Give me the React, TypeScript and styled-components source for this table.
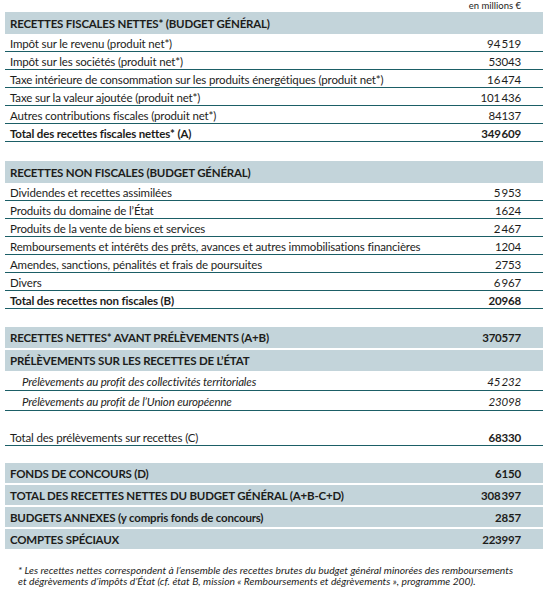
import { FC } from 'react';
import styled, { createGlobalStyle } from 'styled-components';

const GlobalStyle = createGlobalStyle`
  html, body {
    margin: 0;
    padding: 0;
    background: #ffffff;
  }
  body {
    font-family: 'Lato', 'Noto Sans', sans-serif;
    color: #1d1d1b;
  }
`;

const Page = styled.div`
  width: 547px;
  padding: 0 4px 0 5px;
  box-sizing: border-box;
`;

const Unit = styled.div`
  height: 12px;
  padding-right: 22px;
  text-align: right;
  font-size: 9.5px;
  line-height: 11px;
`;

const Group = styled.div<{ $top: number }>`
  margin-top: ${props => props.$top}px;
`;

const Band = styled.div<{ $spaced?: boolean; $h?: number }>`
  display: flex;
  justify-content: space-between;
  align-items: center;
  height: ${props => props.$h ?? 21}px;
  margin-top: ${props => (props.$spaced ? 2 : 0)}px;
  padding: 0 22px 0 5px;
  box-sizing: border-box;
  background: #c3d4da;
  font-size: 11.5px;
  letter-spacing: -0.2px;
  font-weight: 700;
  white-space: nowrap;
`;

const Row = styled.div<{ $bold?: boolean; $italic?: boolean }>`
  display: flex;
  justify-content: space-between;
  align-items: flex-end;
  height: ${props => (props.$italic ? 20 : 18)}px;
  padding: 0 22px ${props => (props.$italic ? 1 : 0)}px ${props => (props.$italic ? 17 : 5)}px;
  box-sizing: border-box;
  border-bottom: 1px solid #1b5e66;
  font-size: 11.5px;
  letter-spacing: -0.15px;
  line-height: 14px;
  font-weight: ${props => (props.$bold ? 700 : 400)};
  font-style: ${props => (props.$italic ? 'italic' : 'normal')};
  white-space: nowrap;
`;

const Note = styled.p`
  margin: 16px 0 0;
  padding-left: 13px;
  font-size: 10.3px;
  line-height: 11px;
  font-style: italic;
  white-space: nowrap;
`;

interface Line {
  label: string;
  value: string;
  bold?: boolean;
}

const fiscales: Line[] = [
  { label: 'Impôt sur le revenu (produit net*)', value: '94\u2009519' },
  { label: 'Impôt sur les sociétés (produit net*)', value: '53043' },
  { label: 'Taxe intérieure de consommation sur les produits énergétiques (produit net*)', value: '16\u2009474' },
  { label: 'Taxe sur la valeur ajoutée (produit net*)', value: '101\u2009436' },
  { label: 'Autres contributions fiscales (produit net*)', value: '84137' },
  { label: 'Total des recettes fiscales nettes* (A)', value: '349\u200A609', bold: true },
];

const nonFiscales: Line[] = [
  { label: 'Dividendes et recettes assimilées', value: '5\u2009953' },
  { label: 'Produits du domaine de l’État', value: '1624' },
  { label: 'Produits de la vente de biens et services', value: '2\u2009467' },
  { label: 'Remboursements et intérêts des prêts, avances et autres immobilisations financières', value: '1204' },
  { label: 'Amendes, sanctions, pénalités et frais de poursuites', value: '2753' },
  { label: 'Divers', value: '6\u2009967' },
  { label: 'Total des recettes non fiscales (B)', value: '20968', bold: true },
];

const prelevements: Line[] = [
  { label: 'Prélèvements au profit des collectivités territoriales', value: '45\u2009232' },
  { label: 'Prélèvements au profit de l’Union européenne', value: '23098' },
];

const totaux: Line[] = [
  { label: 'FONDS DE CONCOURS (D)', value: '6150' },
  { label: 'TOTAL DES RECETTES NETTES DU BUDGET GÉNÉRAL (A+B-C+D)', value: '308\u2009397' },
  { label: 'BUDGETS ANNEXES (y compris fonds de concours)', value: '2857' },
  { label: 'COMPTES SPÉCIAUX', value: '223997' },
];

const Rows: FC<{ lines: Line[]; italic?: boolean }> = ({ lines, italic }) => (
  <>
    {lines.map(line => (
      <Row key={line.label} $bold={line.bold} $italic={italic}>
        <span>{line.label}</span>
        <span>{line.value}</span>
      </Row>
    ))}
  </>
);

const App: FC = () => (
  <Page>
    <GlobalStyle />
    <Unit>en millions €</Unit>

    <Group $top={0}>
      <Band $h={22}>RECETTES FISCALES NETTES* (BUDGET GÉNÉRAL)</Band>
      <Rows lines={fiscales} />
    </Group>

    <Group $top={19}>
      <Band $h={22}>RECETTES NON FISCALES (BUDGET GÉNÉRAL)</Band>
      <Rows lines={nonFiscales} />
    </Group>

    <Group $top={18}>
      <Band>
        <span>RECETTES NETTES* AVANT PRÉLÈVEMENTS (A+B)</span>
        <span>370577</span>
      </Band>
      <Band $spaced>PRÉLÈVEMENTS SUR LES RECETTES DE L’ÉTAT</Band>
      <Rows lines={prelevements} italic />
    </Group>

    <Group $top={17}>
      <Row>
        <span>Total des prélèvements sur recettes (C)</span>
        <b>68330</b>
      </Row>
    </Group>

    <Group $top={17}>
      {totaux.map((line, i) => (
        <Band key={line.label} $spaced={i > 0} $h={20}>
          <span>{line.label}</span>
          <span>{line.value}</span>
        </Band>
      ))}
    </Group>

    <Note>
      * Les recettes nettes correspondent à l’ensemble des recettes brutes du budget général minorées des remboursements
      <br />
      et dégrèvements d’impôts d’État (cf. état B, mission « Remboursements et dégrèvements », programme 200).
    </Note>
  </Page>
);

export default App;
